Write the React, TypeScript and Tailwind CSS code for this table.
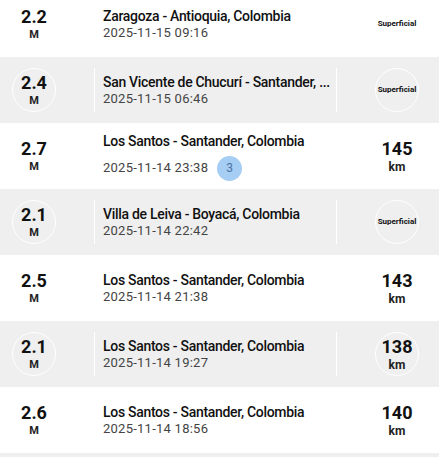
type Quake = {
  mag: string;
  place: string;
  time: string;
  depth: string | null;
  badge?: string;
};

const QUAKES: Quake[] = [
  { mag: "2.2", place: "Zaragoza - Antioquia, Colombia", time: "2025-11-15 09:16", depth: null },
  { mag: "2.4", place: "San Vicente de Chucurí - Santander, ...", time: "2025-11-15 06:46", depth: null },
  { mag: "2.7", place: "Los Santos - Santander, Colombia", time: "2025-11-14 23:38", depth: "145", badge: "3" },
  { mag: "2.1", place: "Villa de Leiva - Boyacá, Colombia", time: "2025-11-14 22:42", depth: null },
  { mag: "2.5", place: "Los Santos - Santander, Colombia", time: "2025-11-14 21:38", depth: "143" },
  { mag: "2.1", place: "Los Santos - Santander, Colombia", time: "2025-11-14 19:27", depth: "138" },
  { mag: "2.6", place: "Los Santos - Santander, Colombia", time: "2025-11-14 18:56", depth: "140" },
  { mag: "2.3", place: "Los Santos - Santander, Colombia", time: "2025-11-14 18:10", depth: "141" },
];

function QuakeRow({ q, shaded }: { q: Quake; shaded: boolean }) {
  return (
    <div
      className={`flex h-[66px] shrink-0 items-center ${shaded ? "bg-[#efefef]" : "bg-white"}`}
    >
      {/* Magnitude */}
      <div className="flex w-[94px] shrink-0 pl-3">
        <div className="flex h-[44px] w-[44px] flex-col items-center justify-center rounded-full border border-white">
          <span className="text-[18px] font-bold leading-[18px] text-[#111]">{q.mag}</span>
          <span className="mt-[3px] text-[11px] font-bold leading-[11px] text-[#222]">M</span>
        </div>
      </div>
      <div className="h-[44px] w-px shrink-0 bg-white" />

      {/* Place + time */}
      <div className="min-w-0 flex-1 pl-2 pr-1">
        <p className="overflow-hidden whitespace-nowrap text-[14px] font-medium leading-[18px] tracking-[-0.3px] text-[#111]">
          {q.place}
        </p>
        {q.badge ? (
          <div className="mt-[6px] flex items-center">
            <span className="text-[13px] leading-[16px] tracking-[0.25px] text-[#444]">{q.time}</span>
            <span className="ml-[9px] flex h-[25px] w-[25px] items-center justify-center rounded-full bg-[#a6cdf4] text-[12px] text-[#4d74a0]">
              {q.badge}
            </span>
          </div>
        ) : (
          <p className="text-[13px] leading-[16px] tracking-[0.25px] text-[#444]">{q.time}</p>
        )}
      </div>

      {/* Depth */}
      <div className="h-[44px] w-px shrink-0 bg-white" />
      <div className="flex w-[102px] shrink-0 pl-[38px]">
        <div className="flex h-[44px] w-[44px] flex-col items-center justify-center rounded-full border border-white">
          {q.depth ? (
            <>
              <span className="text-[18px] font-bold leading-[18px] text-[#111]">{q.depth}</span>
              <span className="mt-[3px] text-[12px] font-bold leading-[12px] text-[#222]">km</span>
            </>
          ) : (
            <span className="whitespace-nowrap text-[8px] font-bold text-[#111]">Superficial</span>
          )}
        </div>
      </div>
    </div>
  );
}

export default function App() {
  return (
    <div
      className="h-[457px] w-[439px] overflow-hidden bg-[#efefef]"
      style={{ fontFamily: "Roboto, 'Noto Sans', sans-serif" }}
    >
      <div className="-mt-[9px] flex flex-col">
        {QUAKES.map((q, i) => (
          <QuakeRow key={i} q={q} shaded={i % 2 === 1} />
        ))}
      </div>
    </div>
  );
}
